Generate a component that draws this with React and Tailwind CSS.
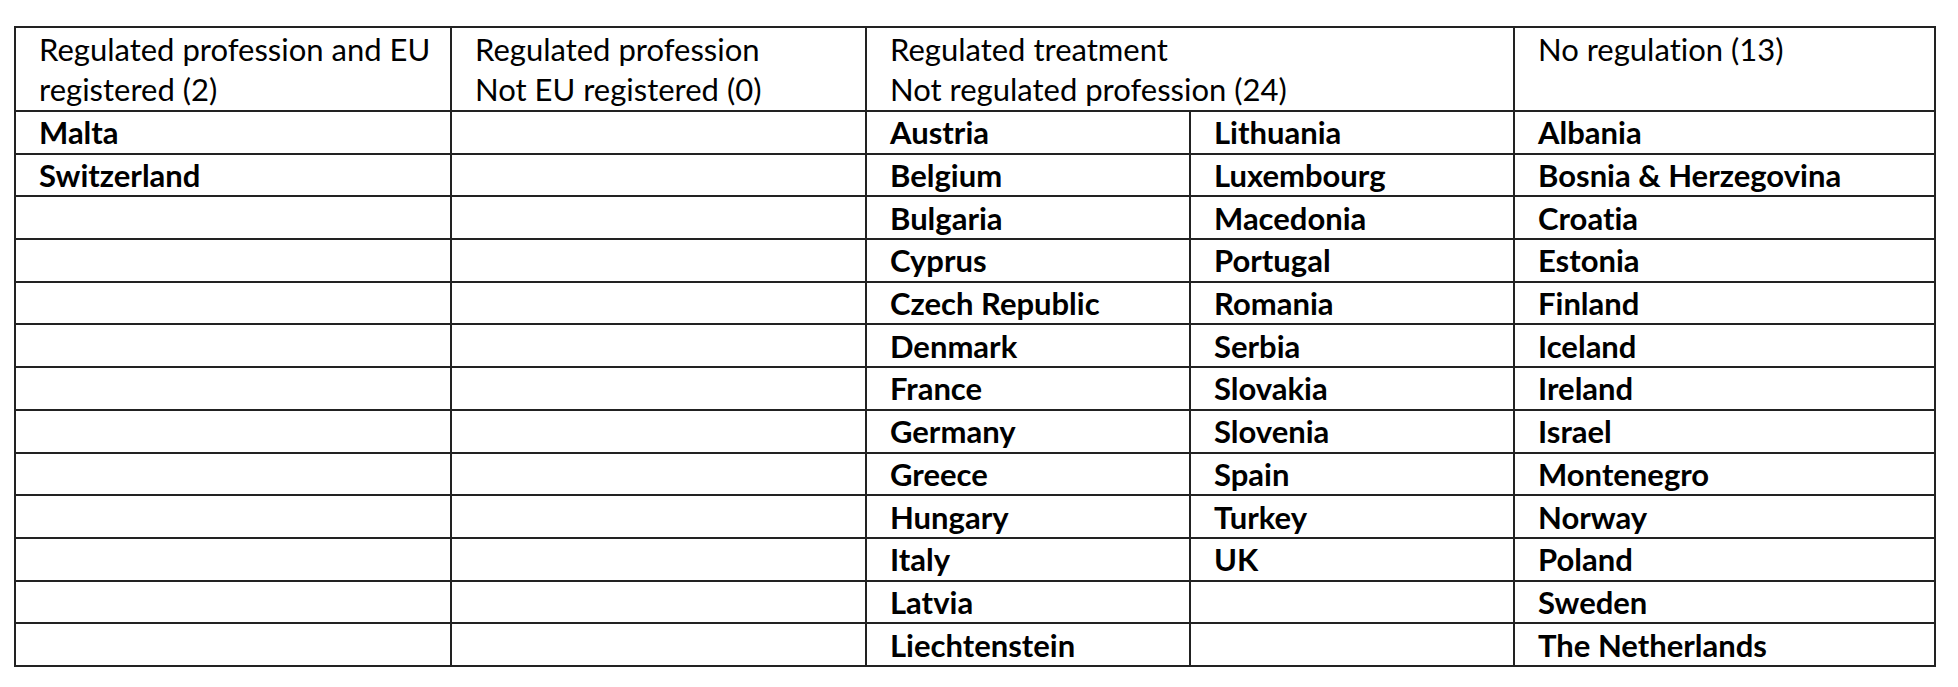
import React from "react";

const colA = ["Malta", "Switzerland"];
const colC = ["Austria", "Belgium", "Bulgaria", "Cyprus", "Czech Republic", "Denmark", "France", "Germany", "Greece", "Hungary", "Italy", "Latvia", "Liechtenstein"];
const colD = ["Lithuania", "Luxembourg", "Macedonia", "Portugal", "Romania", "Serbia", "Slovakia", "Slovenia", "Spain", "Turkey", "UK"];
const colE = ["Albania", "Bosnia & Herzegovina", "Croatia", "Estonia", "Finland", "Iceland", "Ireland", "Israel", "Montenegro", "Norway", "Poland", "Sweden", "The Netherlands"];

const cell = "border-2 border-[#222] pl-[23px] pr-2 align-middle font-bold leading-[40px] whitespace-nowrap";
const head = "border-2 border-[#222] pl-[23px] pr-2 pt-[1px] text-left align-top font-normal leading-[40px] whitespace-nowrap";

export default function App() {
  const rows = Array.from({ length: 13 }, (_, i) => i);
  return (
    <div className="w-[1958px] h-[687px] bg-white pt-[26px] pl-[14px] font-['Lato',sans-serif] text-[31px] text-black [font-variant-ligatures:none]">
      <table className="border-collapse table-fixed w-[1920px]">
        <colgroup>
          <col className="w-[436px]" />
          <col className="w-[415px]" />
          <col className="w-[324px]" />
          <col className="w-[324px]" />
          <col className="w-[421px]" />
        </colgroup>
        <thead>
          <tr className="h-[84px]">
            <th className={head}>
              Regulated profession and EU
              <br />
              registered (2)
            </th>
            <th className={head}>
              Regulated profession
              <br />
              Not EU registered (0)
            </th>
            <th colSpan={2} className={head + " pl-[20px]"}>
              Regulated treatment
              <br />
              Not regulated profession (24)
            </th>
            <th className={head}>No regulation (13)</th>
          </tr>
        </thead>
        <tbody>
          {rows.map((i) => (
            <tr key={i} className="h-[42.7px]">
              <td className={cell}>{colA[i] || ""}</td>
              <td className={cell}></td>
              <td className={cell + " pl-[20px]"}>{colC[i] || ""}</td>
              <td className={cell + " pl-[20px]"}>{colD[i] || ""}</td>
              <td className={cell}>{colE[i] || ""}</td>
            </tr>
          ))}
        </tbody>
      </table>
    </div>
  );
}
